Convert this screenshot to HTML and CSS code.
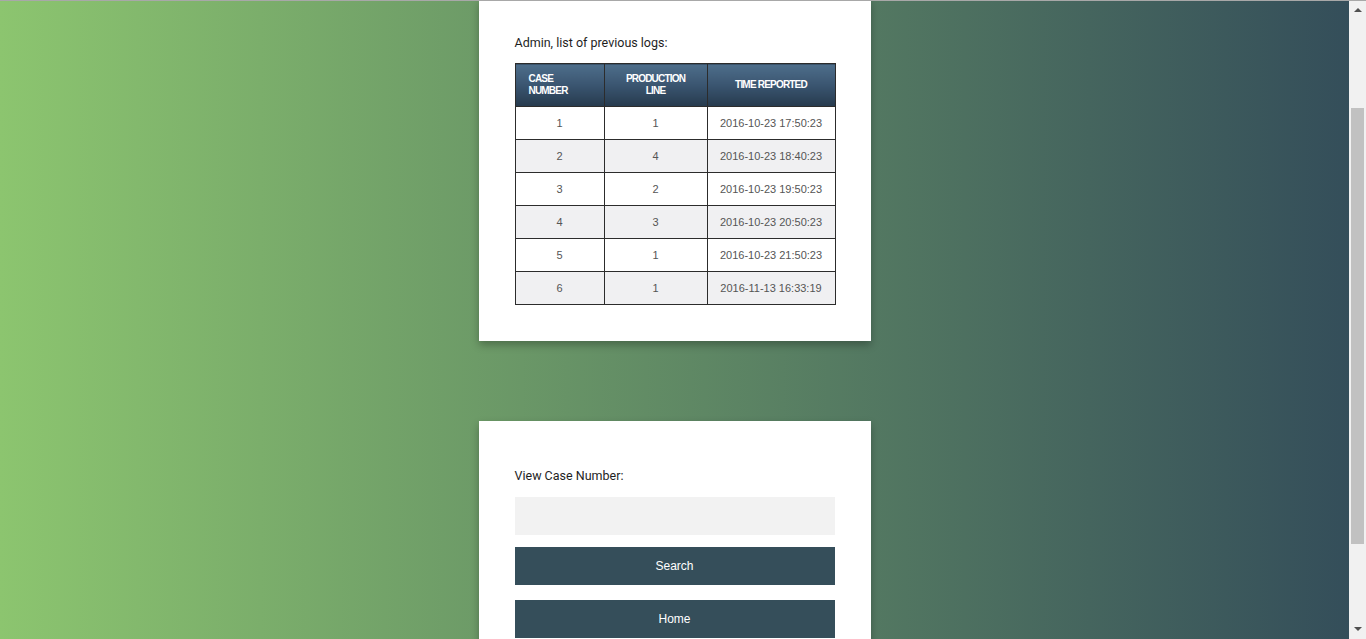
FILE: index.html
```html
<!DOCTYPE html>
<html lang="en">
<head>
<meta charset="utf-8">
<title>Admin logs</title>
<link rel="stylesheet" href="styles.css">
</head>
<body>
<div class="topline"></div>
<div class="scrollbar" aria-hidden="true">
  <div class="sb-btn"><span class="arrow up"></span></div>
  <div class="sb-track"><div class="sb-thumb"></div></div>
  <div class="sb-btn"><span class="arrow down"></span></div>
</div>
<main class="page">
  <section class="card card-logs">
    <p class="label">Admin, list of previous logs:</p>
    <table class="logs">
      <colgroup>
        <col class="c1"><col class="c2"><col class="c3">
      </colgroup>
      <thead>
        <tr>
          <th class="left">CASE<br>NUMBER</th>
          <th>PRODUCTION<br>LINE</th>
          <th>TIME REPORTED</th>
        </tr>
      </thead>
      <tbody>
        <tr><td>1</td><td>1</td><td>2016-10-23 17:50:23</td></tr>
        <tr><td>2</td><td>4</td><td>2016-10-23 18:40:23</td></tr>
        <tr><td>3</td><td>2</td><td>2016-10-23 19:50:23</td></tr>
        <tr><td>4</td><td>3</td><td>2016-10-23 20:50:23</td></tr>
        <tr><td>5</td><td>1</td><td>2016-10-23 21:50:23</td></tr>
        <tr><td>6</td><td>1</td><td>2016-11-13 16:33:19</td></tr>
      </tbody>
    </table>
  </section>

  <section class="card card-search">
    <label class="label" for="case">View Case Number:</label>
    <input id="case" class="field" type="text">
    <button class="btn btn-search" type="button">Search</button>
    <button class="btn btn-home" type="button">Home</button>
  </section>
</main>
<script src="script.js"></script>
</body>
</html>
```

FILE: styles.css
```css
html {
  background: linear-gradient(to right, #8cc56f 0%, #344e5a 98.8%, #344e5a 100%);
  min-height: 100%;
}
body {
  margin: 0;
  font-family: Roboto, "Liberation Sans", Arial, sans-serif;
}

.topline {
  position: fixed;
  top: 0; left: 0; right: 0;
  height: 1px;
  background: #a8a8a8;
  z-index: 6;
}

/* fake window scrollbar */
.scrollbar {
  position: fixed;
  top: 0; right: 0;
  width: 17px;
  height: 100%;
  background: #f1f1f1;
  display: flex;
  flex-direction: column;
  z-index: 5;
}
.sb-btn {
  height: 17px;
  display: flex;
  align-items: center;
  justify-content: center;
}
.arrow {
  width: 0; height: 0;
  border-left: 4px solid transparent;
  border-right: 4px solid transparent;
}
.arrow.up { border-bottom: 4px solid #505050; margin-top: 3px; }
.arrow.down { border-top: 4px solid #505050; margin-bottom: 3px; }
.sb-track {
  flex: 1;
  padding: 91px 2px 0;
}
.sb-thumb {
  height: 436px;
  background: #c1c1c1;
}

.page {
  width: calc(100% - 17px);
  display: flex;
  flex-direction: column;
  align-items: center;
  gap: 80px;
  padding: 127px 0 77px;
}
.card {
  width: 320px;
  background: #fff;
  padding: 36px;
  box-shadow: 0 4px 8px rgba(0, 0, 0, 0.28);
  display: flex;
  flex-direction: column;
}
.label {
  margin: 0;
  font-size: 12.5px;
  line-height: 16px;
  color: #1e1e1e;
}
.card-logs .label { margin-bottom: 12px; }

.logs {
  width: 320px;
  border-collapse: collapse;
  table-layout: fixed;
  font-family: "Liberation Sans", Arial, sans-serif;
}
.logs .c1 { width: 89px; }
.logs .c2 { width: 103px; }
.logs .c3 { width: 128px; }
.logs th {
  height: 43px;
  padding: 0 4px;
  box-sizing: border-box;
  background: linear-gradient(to bottom, #4e6e8b 0%, #3a5570 50%, #263a4d 100%);
  color: #fff;
  font-size: 10px;
  font-weight: bold;
  line-height: 12px;
  letter-spacing: -0.8px;
  text-align: center;
  border: 1px solid #2c2c2c;
  border-left-color: #8a9aa8;
}
.logs th:first-child { border-left-color: #2c2c2c; }
.logs th.left { text-align: left; padding-left: 13px; }
.logs td {
  height: 33px;
  padding: 0;
  box-sizing: border-box;
  border: 1px solid #2c2c2c;
  text-align: center;
  font-size: 11px;
  color: #555;
}
.logs tbody tr:nth-child(even) td { background: #f0f0f2; }

.card-search { padding-top: 47px; }
.card-search .label { display: block; margin-bottom: 13px; }
.field {
  display: block;
  width: 320px;
  height: 38px;
  box-sizing: border-box;
  border: 0;
  background: #f2f2f2;
  margin: 0 0 12px;
  padding: 0 10px;
  outline: none;
}
.btn {
  display: block;
  width: 320px;
  height: 38px;
  border: 0;
  background: #354e5a;
  color: #fff;
  font-family: "Liberation Sans", Arial, sans-serif;
  font-size: 12px;
  cursor: pointer;
  padding: 0;
}
.btn-search { margin-bottom: 15px; }
```

FILE: script.js
```js
window.scrollTo(0, 128);
window.addEventListener('load', function () { window.scrollTo(0, 128); });
```
